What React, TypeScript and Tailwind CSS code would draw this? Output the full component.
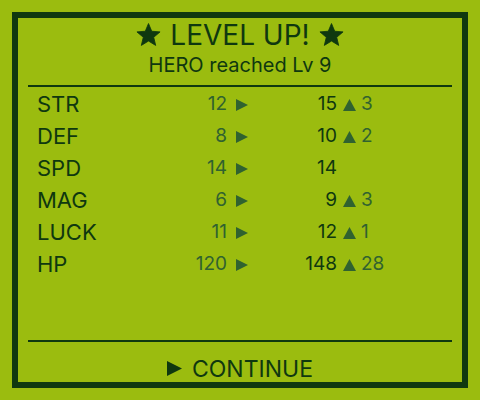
const stats = [
  { name: 'STR', before: 12, after: 15 },
  { name: 'DEF', before: 8, after: 10 },
  { name: 'SPD', before: 14, after: 14 },
  { name: 'MAG', before: 6, after: 9 },
  { name: 'LUCK', before: 11, after: 12 },
  { name: 'HP', before: 120, after: 148 },
];

function Star() {
  return (
    <svg width="25" height="24" viewBox="0 0 24 23" className="shrink-0">
      <path
        d="M12 0.5l3.1 7.4 8 .6-6.1 5.2 1.9 7.8L12 17.3l-6.9 4.2 1.9-7.8L.9 8.5l8-.6z"
        fill="#0f380f"
        strokeLinejoin="round"
        stroke="#0f380f"
        strokeWidth="0.8"
      />
    </svg>
  );
}

function PlayArrow({ size, color }: { size: number; color: string }) {
  return (
    <svg width={size} height={size} viewBox="0 0 12 12" className="shrink-0">
      <path d="M0 0L12 6L0 12Z" fill={color} />
    </svg>
  );
}

function UpArrow() {
  return (
    <svg width="13" height="12" viewBox="0 0 13 12" className="shrink-0">
      <path d="M6.5 0L13 12H0Z" fill="#306230" />
    </svg>
  );
}

export default function App() {
  return (
    <div
      className="w-[480px] h-[400px] bg-[#9bbc0f] p-3 text-[#0f380f]"
      style={{ fontFamily: 'Inter, "Noto Sans", sans-serif' }}
    >
      <div className="h-full border-[6px] border-[#0f380f] flex flex-col px-[10px] overflow-hidden">
        <div className="flex flex-col items-center">
          <div className="flex items-center gap-[9px] text-[28px] leading-[34px]">
            <Star />
            <span>LEVEL UP!</span>
            <Star />
          </div>
          <div className="text-[20px] leading-[24px] mt-[1px]">HERO reached Lv 9</div>
        </div>

        <div className="h-[2px] bg-[#0f380f] mt-[8px]" />

        <div className="flex-1 pt-[1px]">
          {stats.map((s) => {
            const gain = s.after - s.before;
            return (
              <div key={s.name} className="grid grid-cols-[159px_40px_25px_85px_1fr] items-center h-[32px]">
                <span className="pl-[9px] text-[22px]">{s.name}</span>
                <span className="text-right text-[19px] text-[#306230]">{s.before}</span>
                <span className="pl-[9px] flex items-center">
                  <PlayArrow size={12} color="#306230" />
                </span>
                <span className="text-right text-[19px]">{s.after}</span>
                {gain > 0 ? (
                  <span className="flex items-center gap-[5px] pl-[6px] text-[19px] text-[#306230]">
                    <UpArrow />
                    {gain}
                  </span>
                ) : (
                  <span />
                )}
              </div>
            );
          })}
        </div>

        <div className="h-[2px] bg-[#0f380f]" />

        <div className="flex items-center justify-center gap-[10px] h-[40px] pt-[13px] text-[23px] leading-[28px]">
          <PlayArrow size={15} color="#0f380f" />
          <span>CONTINUE</span>
        </div>
      </div>
    </div>
  );
}
